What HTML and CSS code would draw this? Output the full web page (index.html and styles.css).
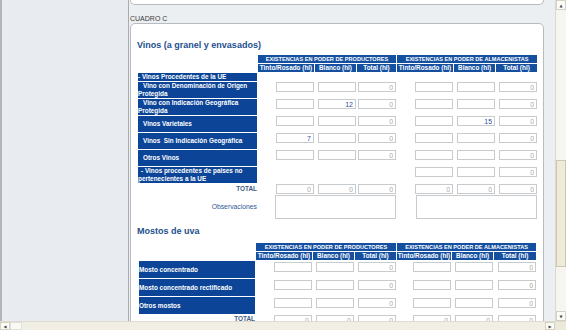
FILE: index.html
```html
<!doctype html>
<html lang="es">
	<head>
		<meta charset="utf-8">
		<title>Cuadro C</title>
		<link rel="stylesheet" href="styles.css">
	</head>
	<body>
		<div class="frame">
			<div class="main">
				<div class="sidebar"></div>

				<div class="content">
					<div class="box box-prev"></div>
					<div class="legend">CUADRO C</div>

					<div class="box box-main">
						<h2>Vinos (a granel y envasados)</h2>
						<table class="grid grid-vinos">
							<colgroup>
								<col class="c-lbl"><col class="c-t"><col class="c-b"><col class="c-tot">
								<col class="c-t2"><col class="c-b2"><col class="c-tot2">
							</colgroup>
							<tr class="row-head">
								<td></td>
								<td class="hd" colspan="3">EXISTENCIAS EN PODER DE PRODUCTORES</td>
								<td class="hd" colspan="3">EXISTENCIAS EN PODER DE ALMACENISTAS</td>
							</tr>
							<tr class="row-head">
								<td></td>
								<td class="hd hd-sub">Tinto/Rosado (hl)</td>
								<td class="hd hd-sub">Blanco (hl)</td>
								<td class="hd hd-sub">Total (hl)</td>
								<td class="hd hd-sub">Tinto/Rosado (hl)</td>
								<td class="hd hd-sub">Blanco (hl)</td>
								<td class="hd hd-sub">Total (hl)</td>
							</tr>
							<tr class="row-head">
								<td class="lbl">- Vinos Procedentes de la UE</td>
								<td></td><td></td><td></td><td></td><td></td><td></td>
							</tr>
							<tr class="row-item">
								<td class="lbl sub">Vino con Denominación de Origen Protegida</td>
								<td class="num"><input type="text" value=""></td>
								<td class="num"><input type="text" value=""></td>
								<td class="num"><input class="calc" type="text" value="0" readonly></td>
								<td class="num"><input type="text" value=""></td>
								<td class="num"><input type="text" value=""></td>
								<td class="num"><input class="calc" type="text" value="0" readonly></td>
							</tr>
							<tr class="row-item">
								<td class="lbl sub">Vino con Indicación Geográfica Protegida</td>
								<td class="num"><input type="text" value=""></td>
								<td class="num"><input type="text" value="12"></td>
								<td class="num"><input class="calc" type="text" value="0" readonly></td>
								<td class="num"><input type="text" value=""></td>
								<td class="num"><input type="text" value=""></td>
								<td class="num"><input class="calc" type="text" value="0" readonly></td>
							</tr>
							<tr class="row-item">
								<td class="lbl sub">Vinos Varietales</td>
								<td class="num"><input type="text" value=""></td>
								<td class="num"><input type="text" value=""></td>
								<td class="num"><input class="calc" type="text" value="0" readonly></td>
								<td class="num"><input type="text" value=""></td>
								<td class="num"><input type="text" value="15"></td>
								<td class="num"><input class="calc" type="text" value="0" readonly></td>
							</tr>
							<tr class="row-item">
								<td class="lbl sub">Vinos&nbsp; Sin Indicación Geográfica</td>
								<td class="num"><input type="text" value="7"></td>
								<td class="num"><input type="text" value=""></td>
								<td class="num"><input class="calc" type="text" value="0" readonly></td>
								<td class="num"><input type="text" value=""></td>
								<td class="num"><input type="text" value=""></td>
								<td class="num"><input class="calc" type="text" value="0" readonly></td>
							</tr>
							<tr class="row-item">
								<td class="lbl sub">Otros Vinos</td>
								<td class="num"><input type="text" value=""></td>
								<td class="num"><input type="text" value=""></td>
								<td class="num"><input class="calc" type="text" value="0" readonly></td>
								<td class="num"><input type="text" value=""></td>
								<td class="num"><input type="text" value=""></td>
								<td class="num"><input class="calc" type="text" value="0" readonly></td>
							</tr>
							<tr class="row-item">
								<td class="lbl ext">- Vinos procedentes de paises no pertenecientes a la UE</td>
								<td></td><td></td><td></td>
								<td class="num"><input type="text" value=""></td>
								<td class="num"><input type="text" value=""></td>
								<td class="num"><input class="calc" type="text" value="0" readonly></td>
							</tr>
							<tr class="row-tot">
								<td class="lbl-total">TOTAL</td>
								<td class="num"><input class="calc" type="text" value="0" readonly></td>
								<td class="num"><input class="calc" type="text" value="0" readonly></td>
								<td class="num"><input class="calc" type="text" value="0" readonly></td>
								<td class="num"><input class="calc" type="text" value="0" readonly></td>
								<td class="num"><input class="calc" type="text" value="0" readonly></td>
								<td class="num"><input class="calc" type="text" value="0" readonly></td>
							</tr>
							<tr class="row-obs">
								<td class="lbl-obs">Observaciones</td>
								<td class="num" colspan="3"><textarea></textarea></td>
								<td class="num" colspan="3"><textarea></textarea></td>
							</tr>
						</table>

						<h2 class="title-next">Mostos de uva</h2>
						<table class="grid grid-mostos">
							<colgroup>
								<col class="c-lbl"><col class="c-t"><col class="c-b"><col class="c-tot">
								<col class="c-t2"><col class="c-b2"><col class="c-tot2">
							</colgroup>
							<tr class="row-head">
								<td></td>
								<td class="hd" colspan="3">EXISTENCIAS EN PODER DE PRODUCTORES</td>
								<td class="hd" colspan="3">EXISTENCIAS EN PODER DE ALMACENISTAS</td>
							</tr>
							<tr class="row-head">
								<td></td>
								<td class="hd hd-sub">Tinto/Rosado (hl)</td>
								<td class="hd hd-sub">Blanco (hl)</td>
								<td class="hd hd-sub">Total (hl)</td>
								<td class="hd hd-sub">Tinto/Rosado (hl)</td>
								<td class="hd hd-sub">Blanco (hl)</td>
								<td class="hd hd-sub">Total (hl)</td>
							</tr>
							<tr class="row-item">
								<td class="lbl">Mosto concentrado</td>
								<td class="num"><input type="text" value=""></td>
								<td class="num"><input type="text" value=""></td>
								<td class="num"><input class="calc" type="text" value="0" readonly></td>
								<td class="num"><input type="text" value=""></td>
								<td class="num"><input type="text" value=""></td>
								<td class="num"><input class="calc" type="text" value="0" readonly></td>
							</tr>
							<tr class="row-item">
								<td class="lbl">Mosto concentrado rectificado</td>
								<td class="num"><input type="text" value=""></td>
								<td class="num"><input type="text" value=""></td>
								<td class="num"><input class="calc" type="text" value="0" readonly></td>
								<td class="num"><input type="text" value=""></td>
								<td class="num"><input type="text" value=""></td>
								<td class="num"><input class="calc" type="text" value="0" readonly></td>
							</tr>
							<tr class="row-item">
								<td class="lbl">Otros mostos</td>
								<td class="num"><input type="text" value=""></td>
								<td class="num"><input type="text" value=""></td>
								<td class="num"><input class="calc" type="text" value="0" readonly></td>
								<td class="num"><input type="text" value=""></td>
								<td class="num"><input type="text" value=""></td>
								<td class="num"><input class="calc" type="text" value="0" readonly></td>
							</tr>
							<tr class="row-tot">
								<td class="lbl-total">TOTAL</td>
								<td class="num"><input class="calc" type="text" value="0" readonly></td>
								<td class="num"><input class="calc" type="text" value="0" readonly></td>
								<td class="num"><input class="calc" type="text" value="0" readonly></td>
								<td class="num"><input class="calc" type="text" value="0" readonly></td>
								<td class="num"><input class="calc" type="text" value="0" readonly></td>
								<td class="num"><input class="calc" type="text" value="0" readonly></td>
							</tr>
						</table>
					</div>
				</div>

				<div class="vscroll">
					<div class="sb-btn">&#9650;</div>
					<div class="sb-track"><div class="sb-thumb"></div></div>
					<div class="sb-btn">&#9660;</div>
				</div>
			</div>

			<div class="hscroll">
				<div class="sb-btn sb-btn-h">&#9664;</div>
				<div class="sb-hthumb"></div>
				<div class="sb-htrack"></div>
				<div class="sb-btn sb-btn-h">&#9654;</div>
				<div class="sb-corner"></div>
			</div>
		</div>
	</body>
</html>
```

FILE: styles.css
```css
* {
	box-sizing: border-box;
}

body {
	margin: 0;
	width: 566px;
	height: 330px;
	overflow: hidden;
	font-family: "Liberation Sans", Arial, sans-serif;
	background: #eceff2;
}

.frame {
	display: flex;
	flex-direction: column;
	height: 330px;
}

.main {
	display: flex;
	flex: 1;
	min-height: 0;
}

.sidebar {
	width: 129px;
	background: #e8ebef;
	border-left: 2px solid #b4b5b7;
	border-right: 1px solid #a9abae;
}

.content {
	flex: 1;
	padding: 0 11px 0 1px;
	overflow: hidden;
	background: #eceff2;
}

.box {
	background: #fff;
	border: 1px solid #b8bbbf;
	border-radius: 5px;
}

.box-prev {
	height: 5px;
	border-top: 0;
	border-radius: 0 0 5px 5px;
}

.legend {
	margin-top: 9px;
	font-size: 7px;
	line-height: 9px;
	color: #3a3a3a;
}

.box-main {
	padding: 16px 5px 0 6px;
	height: 400px;
}

h2 {
	margin: 0;
	font-size: 9px;
	line-height: 11px;
	font-weight: bold;
	color: #23508e;
}

.title-next {
	margin-top: 6px;
}

/* grilles */
.grid {
	table-layout: fixed;
	border-collapse: separate;
	border-spacing: 1px;
	margin-top: 3px;
}

.grid td {
	padding: 0;
}

.grid-vinos {
	width: 401px;
}

.grid-vinos .c-lbl { width: 119px; }
.grid-vinos .c-t { width: 56px; }
.grid-vinos .c-b { width: 41px; }
.grid-vinos .c-tot { width: 39px; }
.grid-vinos .c-t2 { width: 56px; }
.grid-vinos .c-b2 { width: 41px; }
.grid-vinos .c-tot2 { width: 41px; }

.grid-mostos {
	width: 399px;
	margin-left: 1px;
	margin-top: 5px;
}

.grid-mostos .c-lbl { width: 116px; }
.grid-mostos .c-t { width: 56px; }
.grid-mostos .c-b { width: 41px; }
.grid-mostos .c-tot { width: 41px; }
.grid-mostos .c-t2 { width: 54px; }
.grid-mostos .c-b2 { width: 41px; }
.grid-mostos .c-tot2 { width: 42px; }

.row-head td { height: 8px; }
.row-item td { height: 16px; }
.row-tot td { height: 10px; }
.row-obs td { height: 24px; }
.grid-mostos .row-item td { height: 17px; }
.grid-mostos .row-item .num { padding-top: 1px; }
.grid-mostos .row-tot .lbl-total { vertical-align: top; }

.hd {
	background: #1550a0;
	color: #fff;
	font-weight: bold;
	font-size: 5.6px;
	line-height: 8px;
	text-align: center;
	white-space: nowrap;
	overflow: hidden;
}

.hd-sub {
	font-size: 6.4px;
}

.lbl {
	background: #0c4597;
	color: #fff;
	font-weight: bold;
	font-size: 6.4px;
	line-height: 8px;
	vertical-align: middle;
}

.lbl.sub {
	text-indent: 5px;
}

.lbl.ext {
	text-indent: 3px;
}

.lbl-total {
	text-align: right;
	font-weight: bold;
	font-size: 6.4px;
	line-height: 8px;
	color: #3c5a86;
	vertical-align: middle;
}

.lbl-obs {
	text-align: right;
	font-size: 6.8px;
	line-height: 8px;
	color: #2f5a96;
	vertical-align: middle;
}

.num {
	vertical-align: top;
}

.num input {
	display: block;
	margin-left: auto;
	width: 38px;
	height: 10px;
	padding: 0 2px;
	border: 1px solid #c8cbce;
	background: #fff;
	font: 7px "Liberation Sans", Arial, sans-serif;
	text-align: right;
	color: #2e4fa0;
	outline: none;
}

.num input.calc {
	color: #a8a8a8;
}

.num textarea {
	display: block;
	margin-left: auto;
	width: 121px;
	height: 24px;
	border: 1px solid #c8cbce;
	resize: none;
	overflow: hidden;
}

/* barres de defilement */
.vscroll {
	width: 11px;
	display: flex;
	flex-direction: column;
	background: #f6f5ef;
	border-left: 1px solid #dcdad0;
}

.sb-btn {
	height: 10px;
	display: flex;
	align-items: center;
	justify-content: center;
	font-family: "DejaVu Sans", sans-serif;
	font-size: 4px;
	color: #4a4a4a;
	background: #fbfbf7;
	border: 1px solid #d4d1c2;
}

.sb-track {
	flex: 1;
}

.sb-thumb {
	margin-top: 150px;
	height: 107px;
	background: #eeebdb;
	border: 1px solid #ccc7ae;
}

.hscroll {
	height: 9px;
	display: flex;
	background: #f1efe3;
	border-top: 1px solid #dedcd0;
}

.sb-btn-h {
	width: 10px;
	height: auto;
}

.sb-hthumb {
	width: 12px;
	background: #f9f9f6;
	border: 1px solid #e2e0d6;
}

.sb-htrack {
	flex: 1;
}

.sb-corner {
	width: 11px;
	background: #ece9d8;
}
```
